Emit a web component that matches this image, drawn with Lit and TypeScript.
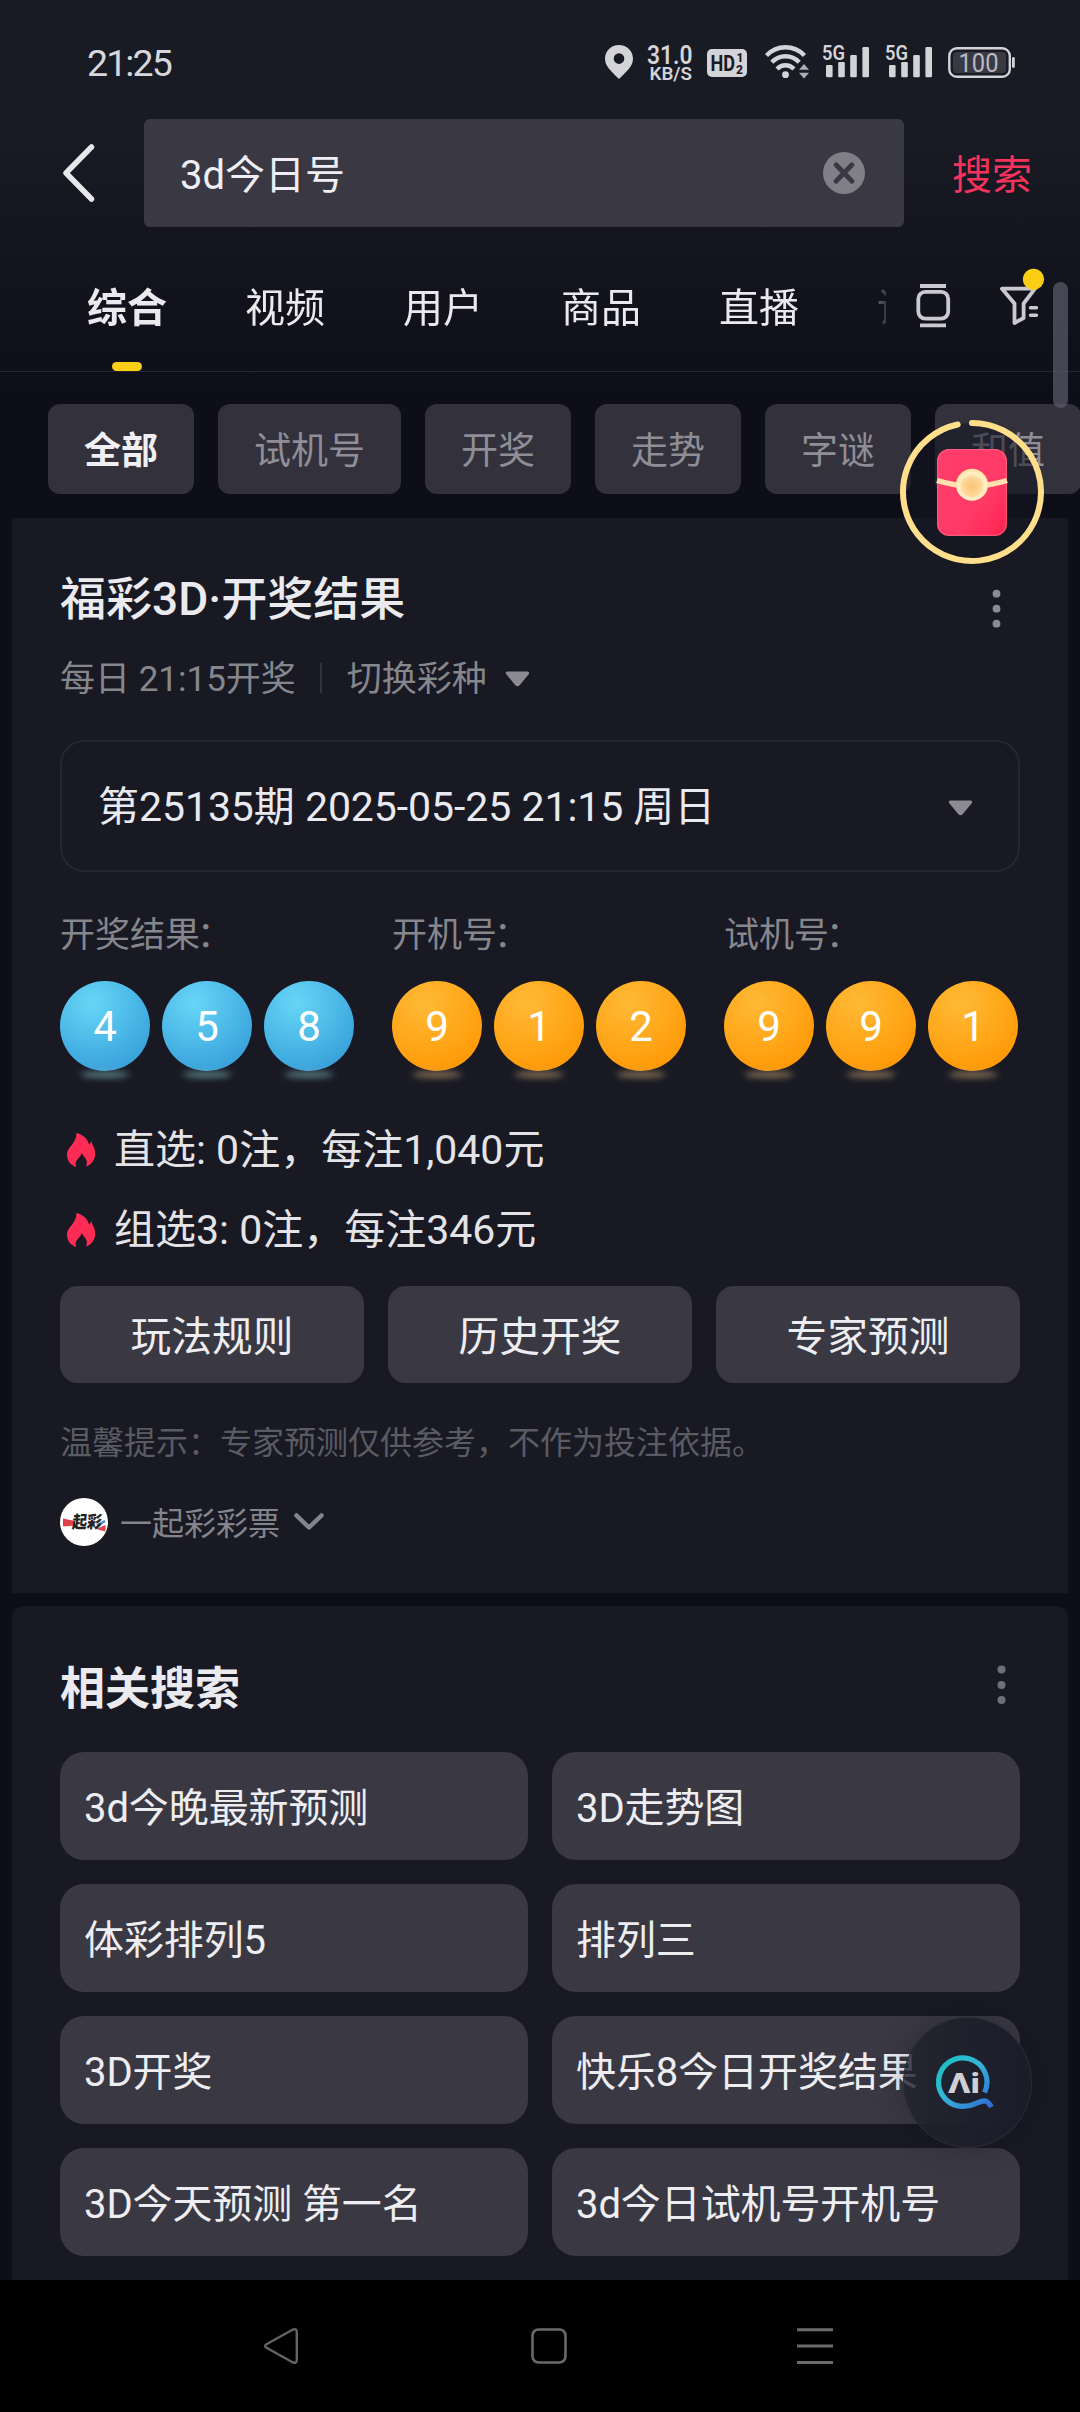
import { LitElement, html, css, svg } from "lit";
import { customElement } from "lit/decorators.js";
import { classMap } from "lit/directives/class-map.js";

const TABS = ["综合", "视频", "用户", "商品", "直播", "话题"];
const CHIPS = ["全部", "试机号", "开奖", "走势", "字谜", "和值"];
const GROUPS = [
  { label: "开奖结果", tone: "blue", balls: [4, 5, 8] },
  { label: "开机号", tone: "orange", balls: [9, 1, 2] },
  { label: "试机号", tone: "orange", balls: [9, 9, 1] },
];
const PRIZES = ["直选: 0注，每注1,040元", "组选3: 0注，每注346元"];
const ACTIONS = ["玩法规则", "历史开奖", "专家预测"];
const RELATED = [
  "3d今晚最新预测", "3D走势图",
  "体彩排列5", "排列三",
  "3D开奖", "快乐8今日开奖结果",
  "3D今天预测 第一名", "3d今日试机号开机号",
];

const base = css`
  * { box-sizing: border-box; }
  svg { display: block; flex: none; overflow: visible; }
`;

@customElement("status-bar")
class StatusBar extends LitElement {
  static styles = [base, css`
    :host { display: flex; height: 119px; padding: 0 65px 0 87px; justify-content: space-between; }
    .time { margin-top: 43px; font-size: 37.5px; line-height: 40px; letter-spacing: -1.9px; color: #d6d6dc; }
    .icons { margin-top: 40px; }
    .icons text { font-family: Roboto, sans-serif; }
  `];

  private signal(x: number) {
    return svg`
      <g transform="translate(${x} 0)">
        <text x="-1" y="20" font-size="20.5" font-weight="600" textLength="23" lengthAdjust="spacingAndGlyphs">5G</text>
        <rect x="3" y="25" width="6.6" height="12.3" rx="1.2"/>
        <rect x="15.2" y="22" width="6.6" height="15.3" rx="1.2"/>
        <rect x="27.2" y="15" width="6.6" height="22.3" rx="1.2"/>
        <rect x="39.4" y="7" width="6.6" height="30.3" rx="1.2"/>
      </g>`;
  }

  render() {
    return html`
      <div class="time">21:25</div>
      <svg class="icons" width="415" height="44" viewBox="600 0 415 44" fill="#d3d3d8">
        <path fill-rule="evenodd" d="M619 5c-7.900 0-14 6-14 13.700C605 26 611 31 619 39c8-8 14-13 14-20.300C633 11 626.900 5 619 5Zm0 8.300a5.300 5.300 0 1 1 0 10.600a5.300 5.300 0 0 1 0-10.600Z"/>
        <text x="647" y="23.700" font-size="25" font-weight="600" textLength="45.500" lengthAdjust="spacingAndGlyphs">31.0</text>
        <text x="649.500" y="40.300" font-size="19" font-weight="600" textLength="42.500" lengthAdjust="spacingAndGlyphs">KB/S</text>
        <rect x="707" y="9" width="40" height="28" rx="5"/>
        <g fill="#181923">
          <text x="710.500" y="31" font-size="22.500" font-weight="700" textLength="24.500" lengthAdjust="spacingAndGlyphs">HD</text>
          <text x="736.500" y="22" font-size="12" font-weight="800">1</text>
          <text x="736" y="34" font-size="12" font-weight="800">2</text>
        </g>
        <g fill="none" stroke="#d3d3d8" stroke-width="4.400">
          <path d="M766.500 15.500C777 4.500 794 4.500 804.500 15.500"/>
          <path d="M771.800 22.300C779.500 14.300 791.500 14.300 799.200 22.300"/>
          <path d="M777 29C782 24 789 24 794 29"/>
        </g>
        <circle cx="785.500" cy="34.700" r="3.400"/>
        <path d="M799 29.700L804 24l5 5.700ZM799 32.800L804 38.500l5-5.700Z" opacity=".8"/>
        ${this.signal(823)}
        ${this.signal(886)}
        <rect x="949.300" y="8.300" width="60.500" height="28.400" rx="7.500" fill="none" stroke="#d3d3d8" stroke-width="2.400"/>
        <rect x="953" y="12" width="53" height="21" rx="4" fill="#393944"/>
        <text x="958.500" y="32" font-size="25" textLength="40" lengthAdjust="spacingAndGlyphs" fill="#b9b9c0">100</text>
        <rect x="1012" y="17" width="2.800" height="11" rx="1.400"/>
      </svg>
    `;
  }
}

@customElement("search-header")
class SearchHeader extends LitElement {
  static styles = [base, css`
    :host { display: block; }
    .search { display: flex; align-items: center; height: 108px; padding-left: 62px; }
    .box {
      display: flex; align-items: center; justify-content: space-between;
      width: 760px; height: 108px; margin-left: 50px; padding: 0 39px 0 36px;
      border-radius: 6px; background: #3a3943; color: #eeeef4;
    }
    .query, .go { font-size: 40px; line-height: 44px; padding-top: 5px; }
    .go { margin-left: 48px; color: #f5325b; }
    .tabbar {
      display: flex; height: 145px; border-bottom: 1px solid #262630; padding-left: 87px;
    }
    .tabs {
      display: flex; gap: 78px; width: 799px; overflow: hidden; flex: none;
      -webkit-mask-image: linear-gradient(90deg, #000 760px, transparent 808px);
      mask-image: linear-gradient(90deg, #000 760px, transparent 808px);
    }
    .tab {
      flex: none; display: flex; flex-direction: column; align-items: center;
      padding-top: 62px; font-size: 40px; line-height: 40px; color: #e9e9ee;
    }
    .tab.active { font-weight: 700; }
    .mark { width: 30px; height: 9px; margin-top: 33px; border-radius: 4.5px; background: #face15; }
    .tools { display: flex; gap: 49px; margin: 45px 0 0 30px; }
    .chips { display: flex; gap: 24px; height: 146px; padding: 32px 0 0 48px; overflow: hidden; }
    .chip {
      flex: none; height: 90px; padding: 3px 36px 0; border-radius: 12px;
      background: #33323c; color: #8f8e97; font-size: 37px; line-height: 90px;
    }
    .chip.active { color: #f0f0f4; font-weight: 700; }
  `];

  render() {
    return html`
      <div class="search">
        <svg width="32" height="58" viewBox="0 0 32 58" fill="none" stroke="#e8e8ea" stroke-width="5.500" stroke-linecap="round" stroke-linejoin="round">
          <path d="M29.500 3L4 29L29.500 55"/>
        </svg>
        <div class="box">
          <span class="query">3d今日号</span>
          <svg width="42" height="42" viewBox="0 0 42 42">
            <circle cx="21" cy="21" r="21" fill="#807f88"/>
            <path d="M13 12.800L29 29.200M29 12.800L13 29.200" stroke="#3a3943" stroke-width="4.800" stroke-linecap="round"/>
          </svg>
        </div>
        <span class="go">搜索</span>
      </div>
      <div class="tabbar">
        <div class="tabs">
          ${TABS.map((t, i) => html`
            <div class=${classMap({ tab: true, active: i === 0 })}>
              <span>${t}</span>${i === 0 ? html`<div class="mark"></div>` : ""}
            </div>`)}
        </div>
        <div class="tools">
          <svg width="34" height="56" viewBox="916 272 34 56" fill="none" stroke="#c9c9cf" stroke-width="3.800">
            <rect x="918.300" y="291.900" width="29.900" height="26.700" rx="7"/>
            <path d="M920 286h26M920 325.400h26"/>
          </svg>
          <svg width="44" height="56" viewBox="999 272 44 56">
            <path d="M1002 288.700H1035L1023.600 303.500V318L1014.500 323V303.500Z" fill="none" stroke="#c9c9cf" stroke-width="3.800" stroke-linejoin="round"/>
            <path d="M1030.500 307.700h6M1030.500 315.300h6" stroke="#c9c9cf" stroke-width="3.400" stroke-linecap="round"/>
            <circle cx="1033.500" cy="279.300" r="10.600" fill="#face15"/>
          </svg>
        </div>
      </div>
      <div class="chips">
        ${CHIPS.map((c, i) => html`<div class=${classMap({ chip: true, active: i === 0 })}>${c}</div>`)}
      </div>
    `;
  }
}

const cardText = css`
  .head { display: flex; justify-content: space-between; height: 60px; }
  .title { line-height: 60px; color: #ebebef; }
`;

@customElement("lottery-card")
class LotteryCard extends LitElement {
  static styles = [base, cardText, css`
    :host { display: block; height: 1075px; margin: 0 12px; padding: 51px 48px 0; background: #181923; }
    .title { font-size: 46px; font-weight: 500; }
    .menu { margin: 20px 19px 0 0; }
    .sub { display: flex; align-items: center; height: 40px; margin-top: 31px; font-size: 35px; line-height: 40px; color: #86868d; }
    .sep { width: 2px; height: 30px; margin: 0 25px 4px 24px; background: #33333c; }
    .sub .arrow { margin: 0 0 2px 18px; }
    .select {
      display: flex; align-items: center; justify-content: space-between;
      height: 132px; margin-top: 40px; padding: 0 45px 0 36px;
      border: 2px solid #25262f; border-radius: 24px;
    }
    .select .arrow { margin-top: 3px; }
    .issue { padding-top: 1px; font-size: 41px; line-height: 48px; letter-spacing: -.06px; color: #e9e9f0; }
    .groups { display: flex; gap: 38px; margin-top: 44px; }
    .label { width: 294px; font-size: 35px; line-height: 40px; color: #86868d; }
    .colon { margin-left: -3px; }
    .balls { display: flex; gap: 12px; margin-top: 25px; }
    .ball {
      position: relative; width: 90px; height: 90px; border-radius: 50%;
      font-size: 42px; line-height: 91px; text-align: center; color: #fff;
    }
    .ball::after {
      content: ""; position: absolute; left: 20px; top: 90px; width: 50px; height: 7px;
      border-radius: 50%; filter: blur(3px); opacity: .6;
    }
    .blue { background: radial-gradient(circle at 36% 24%, #68d5f6 0%, #4cb9e8 45%, #2f93d1 100%); }
    .blue::after { background: #7fb5bb; }
    .orange { background: radial-gradient(circle at 36% 24%, #ffb936 0%, #ffa81b 45%, #ff9500 90%); }
    .orange::after { background: #c4a172; }
    .prizes { margin-top: 40px; }
    .prize { display: flex; align-items: center; gap: 18px; height: 80px; padding: 0 0 2px 7px; font-size: 41px; line-height: 80px; color: #e4e4e8; }
    .actions { display: grid; grid-template-columns: repeat(3, 1fr); gap: 24px; margin-top: 15px; }
    .action {
      height: 97px; padding-top: 3px; border-radius: 18px; background: #3a3943; color: #eeeef2;
      font-size: 40.7px; line-height: 97px; text-align: center;
    }
    .tip { margin-top: 40px; font-size: 32px; line-height: 40px; color: #5b5b64; }
    .source { display: flex; align-items: center; height: 48px; margin-top: 35px; font-size: 32px; color: #84848c; }
    .name { padding-top: 3px; margin: 0 14px 0 12px; line-height: 40px; }
    .mark { font-family: "Noto Sans CJK SC", sans-serif; }
  `];

  private arrow() {
    return html`<svg class="arrow" width="25" height="16" viewBox="0 0 25 16">
      <path d="M2.300 2h20.400L13.500 13.200q-1 1.100-2 0Z" fill="#8b8b91" stroke="#8b8b91" stroke-width="3" stroke-linejoin="round"/>
    </svg>`;
  }

  render() {
    return html`
      <div class="head">
        <div class="title">福彩3D·开奖结果</div>
        <svg class="menu" width="9" height="40" viewBox="0 0 9 40" fill="#8b8b92">
          <circle cx="4.500" cy="4.700" r="3.900"/><circle cx="4.500" cy="19.700" r="3.900"/><circle cx="4.500" cy="34.700" r="3.900"/>
        </svg>
      </div>
      <div class="sub">
        <span>每日 21:15开奖</span><div class="sep"></div><span>切换彩种</span>${this.arrow()}
      </div>
      <div class="select">
        <span class="issue">第25135期 2025-05-25 21:15 周日</span>${this.arrow()}
      </div>
      <div class="groups">
        ${GROUPS.map(g => html`
          <div>
            <div class="label">${g.label}<span class="colon">：</span></div>
            <div class="balls">${g.balls.map(n => html`<div class="ball ${g.tone}">${n}</div>`)}</div>
          </div>`)}
      </div>
      <div class="prizes">
        ${PRIZES.map(p => html`
          <div class="prize">
            <svg width="29" height="34" viewBox="0 0 29 34" fill="#fe2c55">
              <path d="M9.500 0C17 2 21 6.500 22 11.500C23.200 10.800 24 9.600 24.300 8C25.500 13 28.500 15 28.200 21C28 27 24.500 31.500 19 33.800C20.500 30.500 20 27 17.800 24.500C16.500 23 15.500 21.700 15 20C14 22 13.500 23.300 11.500 25C8.500 27.800 8 31 9.200 34C3 32 0 27.500 0 21.500C0 14 9.500 10.500 9.500 0Z"/>
            </svg>
            <span>${p}</span>
          </div>`)}
      </div>
      <div class="actions">${ACTIONS.map(a => html`<div class="action">${a}</div>`)}</div>
      <div class="tip">温馨提示：专家预测仅供参考，不作为投注依据。</div>
      <div class="source">
        <svg width="48" height="48" viewBox="0 0 48 48">
          <circle cx="24" cy="24" r="24" fill="#fff"/>
          <path d="M3 20.500L15 23V27.500L3 28.500Z" fill="#e2404b"/>
          <path d="M36 31L45.500 27V33.500Z" fill="#e2404b"/>
          <path d="M37 27.500L45 23" stroke="#4b83d6" stroke-width="2.500"/>
          <text class="mark" x="12.500" y="30.500" font-size="17" font-weight="900" fill="#222" textLength="29.500" lengthAdjust="spacingAndGlyphs" transform="skewX(-6) translate(2.500 0)">起彩</text>
        </svg>
        <span class="name">一起彩彩票</span>
        <svg width="30" height="18" viewBox="0 0 30 18" fill="none" stroke="#84848c" stroke-width="4.500" stroke-linecap="round" stroke-linejoin="round">
          <path d="M2.500 2.500L15 14.500L27.500 2.500"/>
        </svg>
      </div>
    `;
  }
}

@customElement("related-card")
class RelatedCard extends LitElement {
  static styles = [base, cardText, css`
    :host { display: block; height: 674px; margin: 13px 12px 0; padding: 52px 48px 0; background: #181923; border-radius: 12px 12px 0 0; }
    .title { padding-top: 2px; font-size: 45px; font-weight: 700; }
    .menu { margin: 7px 14px 0 0; }
    .grid { display: grid; grid-template-columns: 1fr 1fr; gap: 24px; margin-top: 34px; }
    .cell {
      height: 108px; padding: 3px 24px 0; border-radius: 24px; background: #3a3943; color: #ededf2;
      font-size: 40px; line-height: 108px; letter-spacing: -.1px; white-space: nowrap;
    }
  `];

  render() {
    return html`
      <div class="head">
        <div class="title">相关搜索</div>
        <svg class="menu" width="9" height="40" viewBox="0 0 9 40" fill="#6f6f78">
          <circle cx="4.500" cy="4.500" r="4"/><circle cx="4.500" cy="20" r="4"/><circle cx="4.500" cy="35" r="4"/>
        </svg>
      </div>
      <div class="grid">${RELATED.map(r => html`<div class="cell">${r}</div>`)}</div>
    `;
  }
}

@customElement("app-root")
class AppRoot extends LitElement {
  static styles = [base, css`
    :host { display: block; }
    .screen {
      position: relative; display: flex; flex-direction: column; width: 1080px; height: 2412px; overflow: hidden;
      font-family: Roboto, "Noto Sans CJK SC", sans-serif;
      background: linear-gradient(180deg, #181a24 0, #181a24 140px, #0e0e18 390px);
    }
    .nav { display: flex; height: 132px; padding: 48px 0 0 264px; background: #000; }
    .home { margin-left: 232px; }
    .recents { margin-left: 230px; }
    .thumb { position: absolute; left: 1053px; top: 282px; width: 15px; height: 126px; border-radius: 7.5px; background: rgba(92, 92, 108, .7); }
    .packet { position: absolute; left: 900px; top: 420px; }
    .ai {
      position: absolute; left: 903px; top: 2017px; width: 129px; height: 131px; border-radius: 50%;
      background: linear-gradient(90deg, rgba(30, 32, 44, .78) 0, rgba(30, 32, 44, .94) 35%, #1b1c2a 100%);
      border: 1px solid #2b2c37; box-shadow: 0 0 30px rgba(10, 11, 22, .25);
    }
    .ai svg { margin: 36px 0 0 34px; }
    .ai text { font-family: Roboto, sans-serif; }
  `];

  render() {
    return html`
      <div class="screen">
        <status-bar></status-bar>
        <search-header></search-header>
        <lottery-card></lottery-card>
        <related-card></related-card>
        <div class="nav">
          <svg width="35" height="36" viewBox="0 0 35 36" fill="none" stroke="#646464" stroke-width="2.400" stroke-linejoin="round">
            <path d="M2.500 16.200L28.500 1.700Q32.800 0 32.800 4V32Q32.800 36 28.500 34.300L2.500 19.800Q-.2 18 2.500 16.200Z"/>
          </svg>
          <svg class="home" width="36" height="36" viewBox="0 0 36 36" fill="none" stroke="#6a6a6a" stroke-width="2.600">
            <rect x="1.500" y="1.500" width="33" height="33" rx="6"/>
          </svg>
          <svg class="recents" width="36" height="36" viewBox="0 0 36 36" stroke="#6a6a6a" stroke-width="3">
            <path d="M0 1.700h36M0 18.100h36M0 34.500h36"/>
          </svg>
        </div>

        <div class="thumb"></div>

        <svg class="packet" width="144" height="144" viewBox="0 0 144 144">
          <defs>
            <linearGradient id="red" x1="0" y1="0" x2="1" y2="1">
              <stop offset="0" stop-color="#ff3d6c"/><stop offset=".6" stop-color="#ff3a66"/><stop offset="1" stop-color="#ff2450"/>
            </linearGradient>
            <radialGradient id="coin" cx=".5" cy=".55" r=".55">
              <stop offset="0" stop-color="#fbc57a"/><stop offset=".5" stop-color="#fdd594"/><stop offset=".75" stop-color="#fff0c8"/><stop offset="1" stop-color="#ffdf98"/>
            </radialGradient>
          </defs>
          <circle cx="72" cy="72" r="69" fill="rgba(20,22,34,.55)"/>
          <path d="M72 3A69 69 0 1 1 57.700 4.500" fill="none" stroke="#ffdf8c" stroke-width="6" stroke-linecap="round"/>
          <rect x="37" y="29" width="70" height="87" rx="12" fill="url(#red)"/>
          <rect x="37.700" y="29.700" width="68.600" height="85.600" rx="11.500" fill="none" stroke="#ff6d8d" stroke-width="1.200" opacity=".6"/>
          <path d="M37 60.500Q72 71.500 107 60.500" fill="none" stroke="#ffe0ae" stroke-width="5.500"/>
          <circle cx="72" cy="64.700" r="16" fill="url(#coin)"/>
        </svg>

        <div class="ai">
          <svg width="56" height="56" viewBox="0 0 56 56">
            <defs>
              <linearGradient id="q" gradientUnits="userSpaceOnUse" x1="6" y1="6" x2="52" y2="52">
                <stop offset="0" stop-color="#1fc0c4"/><stop offset=".4" stop-color="#35b5d6"/><stop offset="1" stop-color="#2f6fd6"/>
              </linearGradient>
            </defs>
            <path d="M46.600 38.500A24.200 24.200 0 1 0 26.700 52.200C35 52.200 41 46.800 46.500 46.800Q50 47 53.500 53" fill="none" stroke="url(#q)" stroke-width="5.200"/>
            <text x="10" y="38.500" font-size="28" font-weight="800" fill="#cfcfd4" textLength="32" lengthAdjust="spacingAndGlyphs">Λi</text>
          </svg>
        </div>
      </div>
    `;
  }
}
